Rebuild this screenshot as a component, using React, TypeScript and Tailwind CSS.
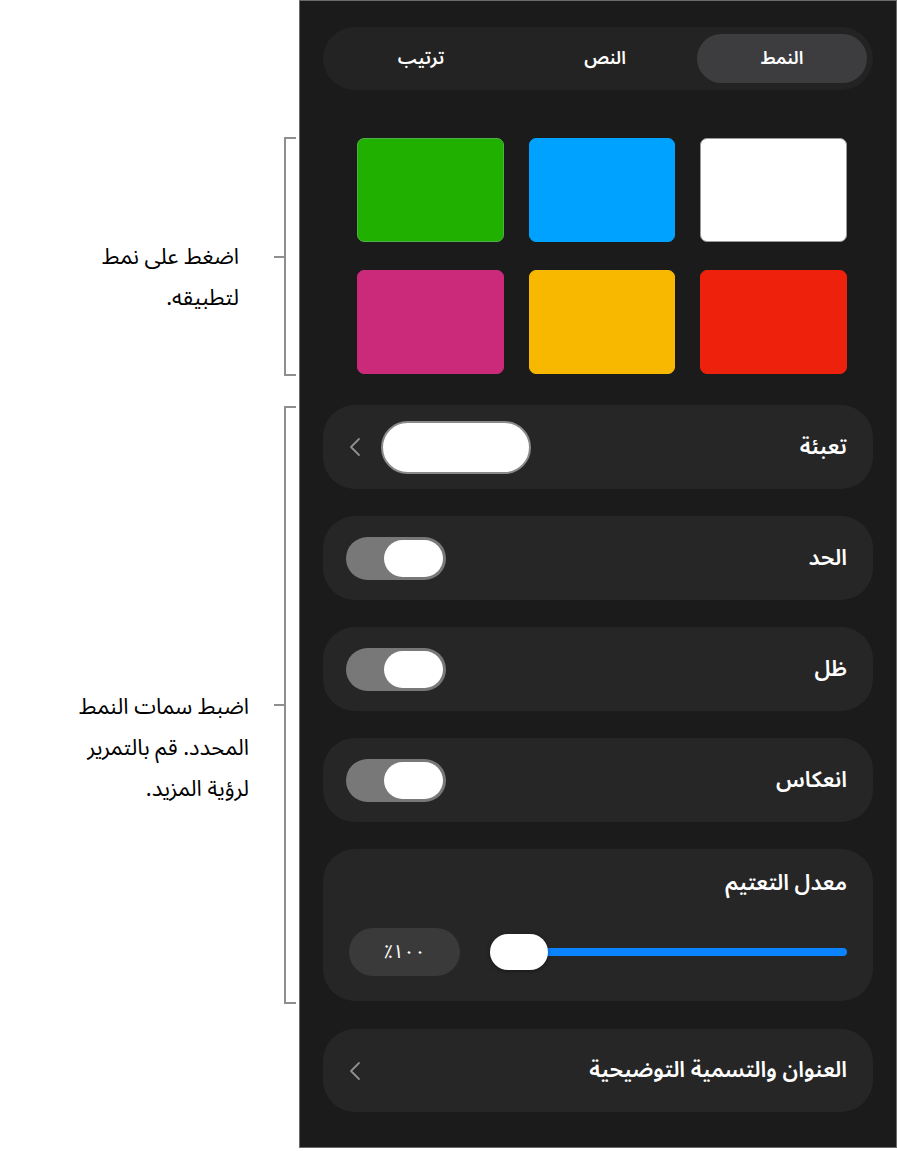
import React from 'react';

// --- Bits ---

const Chevron = () => (
  <svg width="12" height="20" viewBox="0 0 12 20" className="shrink-0">
    <path d="M10 2 L2 10 L10 18" fill="none" stroke="#8e8e93" strokeWidth="1.8" strokeLinecap="round" strokeLinejoin="round" />
  </svg>
);

const Toggle = () => (
  <div dir="ltr" className="w-[100px] h-[43px] -ml-[3px] rounded-full bg-[#787878] p-[3px] flex justify-end">
    <div className="w-[59px] h-[37px] rounded-full bg-white" />
  </div>
);

const Row: React.FC<{ label: string; children?: React.ReactNode }> = ({ label, children }) => (
  <div className="h-[84px] rounded-[32px] bg-[#262626] flex items-center justify-between px-[26px]">
    <span className="text-[22px] font-semibold text-white">{label}</span>
    {children}
  </div>
);

// callout on the left: text, tick and a bracket spanning the section
const Callout: React.FC<{ lines: string[]; height: string; textPos: string }> = ({ lines, height, textPos }) => (
  <div className={`flex items-start justify-end ${height}`}>
    <div dir="rtl" className={`text-[22px] leading-[41px] text-black ${textPos}`}>
      {lines.map((l) => (
        <div key={l}>{l}</div>
      ))}
    </div>
    <div className="self-center w-[10px] h-[2px] bg-[#8e8e8e]" />
    <div className="h-full w-[12px] border-l-2 border-t-2 border-b-2 border-[#8e8e8e] mr-[3px]" />
  </div>
);

const swatches = [
  { color: 'bg-white', ring: 'border-[#9a9a9a]' },
  { color: 'bg-[#00a2ff]', ring: 'border-[#00a2ff]' },
  { color: 'bg-[#20b000]', ring: 'border-[#4fae46]' },
  { color: 'bg-[#ee220c]', ring: 'border-[#ee220c]' },
  { color: 'bg-[#f8b800]', ring: 'border-[#f8b800]' },
  { color: 'bg-[#cb2a7b]', ring: 'border-[#cb2a7b]' },
];

export default function App() {
  return (
    <div className="min-h-screen w-[897px] bg-white flex font-['Noto_Sans_Arabic','DejaVu_Sans',sans-serif]">
      {/* Callouts */}
      <div className="w-[299px] shrink-0 pt-[137px]">
        <Callout lines={['اضغط على نمط', 'لتطبيقه.']} height="h-[239px]" textPos="mt-[100px] mr-[35px]" />
        <div className="h-[30px]" />
        <Callout lines={['اضبط سمات النمط', 'المحدد. قم بالتمرير', 'لرؤية المزيد.']} height="h-[598px]" textPos="mt-[281px] mr-[25px]" />
      </div>

      {/* Panel */}
      <div dir="rtl" className="w-[598px] h-[1148px] border border-[#6b6b6b] bg-[#1b1b1b] px-[23px] pt-[26px]">
        {/* Segmented control */}
        <div className="h-[63px] rounded-full bg-[#232323] px-[6px] py-[7px] grid grid-cols-[170px_1fr_1fr]">
          <div className="rounded-full bg-[#3d3d3f] flex items-center justify-center text-[18px] font-semibold text-white">النمط</div>
          <div className="flex items-center justify-center text-[18px] font-semibold text-white">النص</div>
          <div className="flex items-center justify-center text-[18px] font-semibold text-white">ترتيب</div>
        </div>

        {/* Style swatches */}
        <div className="mt-[48px] pr-[26px] pl-[34px] grid grid-cols-3 gap-x-[25px] gap-y-[28px]">
          {swatches.map((s, i) => (
            <div key={i} className={`h-[104px] rounded-[7px] border ${s.color} ${s.ring}`} />
          ))}
        </div>

        {/* Settings */}
        <div className="mt-[31px] flex flex-col gap-[27px]">
          <Row label="تعبئة">
            <div className="flex items-center gap-[20px]">
              <div className="w-[150px] h-[53px] rounded-full bg-white border-2 border-[#8a8a8a]" />
              <Chevron />
            </div>
          </Row>
          <Row label="الحد">
            <Toggle />
          </Row>
          <Row label="ظل">
            <Toggle />
          </Row>
          <Row label="انعكاس">
            <Toggle />
          </Row>

          <div className="h-[152px] rounded-[32px] bg-[#262626] px-[26px] pt-[18px]">
            <div className="text-[22px] font-semibold text-white">معدل التعتيم</div>
            <div className="mt-[28px] flex items-center gap-[30px]">
              <div className="relative flex-1 h-[36px] flex items-center">
                <div className="w-full h-[8px] rounded-full bg-[#0a84ff]" />
                <div className="absolute left-0 top-0 w-[58px] h-[36px] rounded-full bg-white shadow-[0_1px_4px_rgba(0,0,0,0.4)]" />
              </div>
              <div className="w-[111px] h-[48px] rounded-full bg-[#3a3a3a] flex items-center justify-center text-[19px] text-white">
                <bdo dir="ltr">٪١٠٠</bdo>
              </div>
            </div>
          </div>

          <div className="h-[83px] mt-[1px] rounded-[32px] bg-[#262626] flex items-center justify-between px-[26px]">
            <span className="text-[22px] font-semibold text-white">العنوان والتسمية التوضيحية</span>
            <Chevron />
          </div>
        </div>
      </div>
    </div>
  );
}
